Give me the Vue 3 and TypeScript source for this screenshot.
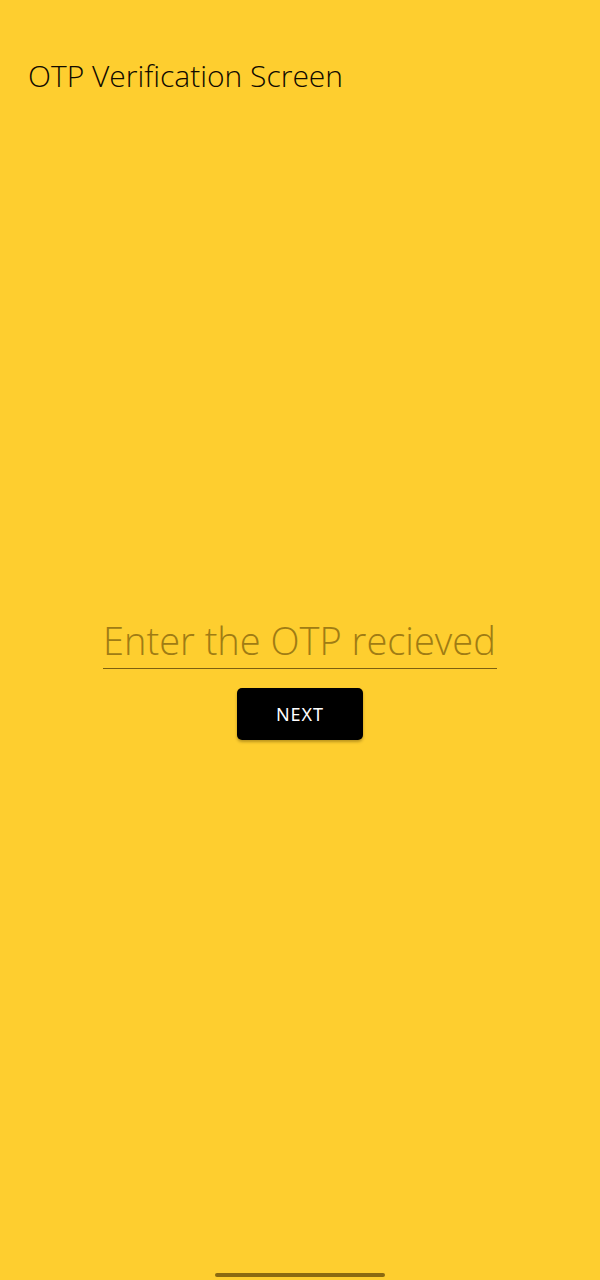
<script setup lang="ts">
import { ref } from 'vue'

const otp = ref('')
</script>

<template>
  <main class="screen">
    <h1 class="title">OTP Verification Screen</h1>
    <form class="form" @submit.prevent>
      <input
        v-model="otp"
        class="otp"
        type="text"
        inputmode="numeric"
        autocomplete="one-time-code"
        aria-label="Enter the OTP recieved"
        placeholder="Enter the OTP recieved"
      />
      <button class="next" type="submit">NEXT</button>
    </form>
    <div class="handle"></div>
  </main>
</template>

<style scoped>
.screen {
  box-sizing: border-box;
  min-height: 100vh;
  display: flex;
  flex-direction: column;
  align-items: center;
  padding: 56px 28px 3px;
  background: #fece2f;
  font-family: "Open Sans", "Noto Sans", sans-serif;
}

.title {
  align-self: stretch;
  margin: 0;
  font-size: 30px;
  font-weight: 300;
  line-height: 40px;
  color: #100a00;
}

.form {
  flex: 1;
  display: flex;
  flex-direction: column;
  align-items: center;
  justify-content: center;
  gap: 19px;
  width: 100%;
  padding-bottom: 16px;
}

.otp {
  box-sizing: border-box;
  width: 394px;
  max-width: 100%;
  height: 56px;
  padding: 0 0 2px;
  border: 0;
  border-bottom: 1px solid #7d6010;
  border-radius: 0;
  outline: none;
  background: transparent;
  font-family: "Open Sans", "Noto Sans", sans-serif;
  font-size: 38px;
  font-weight: 300;
  color: #17120a;
}

.otp::placeholder {
  color: #a07c14;
  opacity: 1;
}

.next {
  width: 126px;
  height: 52px;
  padding: 0;
  border: 0;
  border-radius: 5px;
  background: #000;
  box-shadow: 0 2px 3px rgba(90, 65, 0, 0.4);
  font-family: "Noto Sans", sans-serif;
  font-size: 18px;
  font-weight: 400;
  letter-spacing: 1px;
  color: #fff;
}

.handle {
  width: 170px;
  height: 4px;
  border-radius: 2px;
  background: #8b6a10;
}
</style>

<style>
body {
  margin: 0;
}
</style>
